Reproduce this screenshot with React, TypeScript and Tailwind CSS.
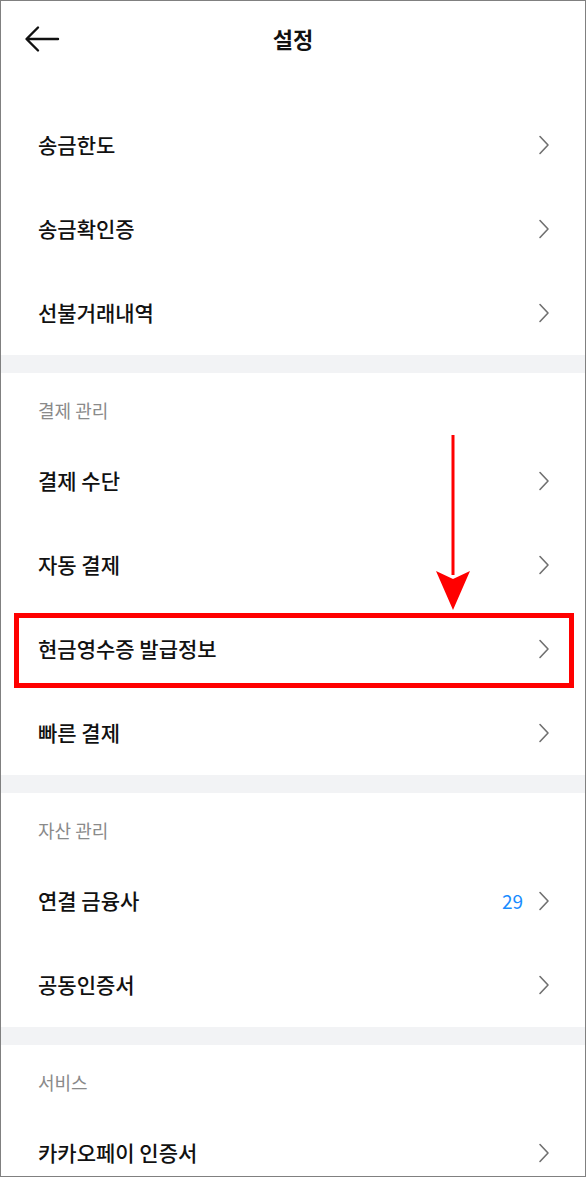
import { Fragment } from 'react';

type Row = { label: string; badge?: string };
type Section = { title?: string; rows: Row[] };

const sections: Section[] = [
  { rows: [{ label: '송금한도' }, { label: '송금확인증' }, { label: '선불거래내역' }] },
  {
    title: '결제 관리',
    rows: [{ label: '결제 수단' }, { label: '자동 결제' }, { label: '현금영수증 발급정보' }, { label: '빠른 결제' }]
  },
  { title: '자산 관리', rows: [{ label: '연결 금융사', badge: '29' }, { label: '공동인증서' }] },
  { title: '서비스', rows: [{ label: '카카오페이 인증서' }] }
];

function Chevron() {
  return (
    <svg width="12" height="20" viewBox="0 0 12 20" fill="none" className="shrink-0">
      <path d="M2 1.5 L10 10 L2 18.5" stroke="#707070" strokeWidth="1.6" strokeLinecap="round" strokeLinejoin="round" />
    </svg>
  );
}

function SettingRow({ row }: { row: Row }) {
  return (
    <div className="flex h-[84px] items-center justify-between pl-[37px] pr-[35px]">
      <span className="text-[21px] font-medium text-[#111]">{row.label}</span>
      <div className="flex items-center gap-[15px]">
        {row.badge ? <span className="text-[19px] text-[#1a8cff]">{row.badge}</span> : null}
        <Chevron />
      </div>
    </div>
  );
}

export default function App() {
  return (
    <div
      className="relative h-[1177px] w-[586px] overflow-hidden border border-[#808080] bg-white"
      style={{ fontFamily: '"Noto Sans CJK KR", "Noto Sans", sans-serif' }}
    >
      <header className="relative flex h-[76px] items-center justify-center">
        <svg
          className="absolute left-[23px] top-[24px]"
          width="36"
          height="28"
          viewBox="0 0 36 28"
          fill="none"
        >
          <path d="M34 14 H3 M14 2.5 L2.5 14 L14 25.5" stroke="#111" strokeWidth="2.4" strokeLinecap="round" strokeLinejoin="round" />
        </svg>
        <h1 className="-mt-[2px] text-[22px] font-bold text-[#111]">설정</h1>
      </header>

      <div className="pt-[26px]">
        {sections.map((section, i) => (
          <Fragment key={i}>
            {i > 0 ? <div className="h-[18px] bg-[#f2f3f5]" /> : null}
            {section.title ? (
              <div className="flex h-[66px] items-start pl-[37px] pt-[23px]">
                <span className="text-[18px] leading-[28px] text-[#8a8a8a]">{section.title}</span>
              </div>
            ) : null}
            {section.rows.map((row) => (
              <SettingRow key={row.label} row={row} />
            ))}
          </Fragment>
        ))}
      </div>

      {/* annotation: red highlight box */}
      <div className="absolute left-[13px] top-[612px] h-[75px] w-[560px] border-[5px] border-[#ff0000]" />

      {/* annotation: red arrow */}
      <svg className="absolute left-[434px] top-[432px]" width="36" height="180" viewBox="0 0 36 180" fill="none">
        <rect x="16.5" y="2" width="3" height="140" fill="#ff0000" />
        <path d="M1 138 L18 177 L35 138 L18 146 Z" fill="#ff0000" />
      </svg>
    </div>
  );
}
